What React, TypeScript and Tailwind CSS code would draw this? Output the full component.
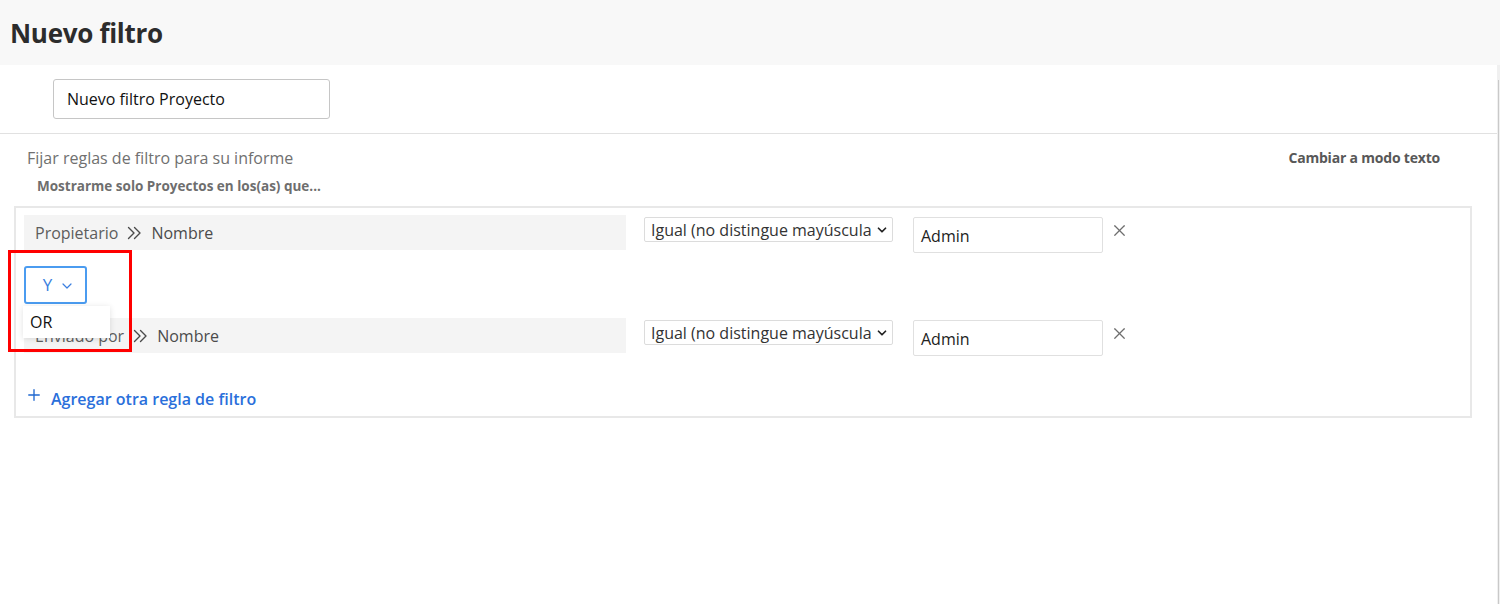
import { ChevronDown, X, Plus } from 'lucide-react'

const font = { fontFamily: '"Open Sans", Lato, sans-serif' }

function DoubleChevron() {
  return (
    <svg width="15" height="14" viewBox="0 0 15 14" fill="none" stroke="currentColor" strokeWidth="1.4" strokeLinecap="round" strokeLinejoin="round" className="mx-[9px] text-[#4a4a4a]">
      <polyline points="1.5,1.5 7,7 1.5,12.5" />
      <polyline points="7.5,1.5 13,7 7.5,12.5" />
    </svg>
  )
}

function RuleRow({ field }: { field: string }) {
  return (
    <div className="flex h-[38px] items-start">
      <div className="flex h-[35px] w-[602px] items-center bg-[#f4f4f4] pl-[11px] text-[16px] leading-[22px] text-[#5d5d5d]">
        <span>{field}</span>
        <DoubleChevron />
        <span className="text-[#4b4b4b]">Nombre</span>
      </div>
      <div className="ml-[18px] mt-[2px] flex h-[25px] w-[249px] items-center justify-between overflow-hidden rounded-[2px] border border-[#dcdcdc] bg-white pl-[6px] pr-[3px] text-[16px] leading-[22px] text-[#333]">
        <span className="overflow-hidden whitespace-nowrap">Igual (no distingue mayúscula</span>
        <ChevronDown size={14} strokeWidth={3} className="shrink-0 text-[#222]" />
      </div>
      <div className="ml-[20px] mt-[2px] flex h-[36px] w-[190px] items-end rounded-[2px] border border-[#e0e0e0] bg-white pb-[5px] pl-[7px] text-[16px] leading-[22px] text-[#222]">
        Admin
      </div>
      <X size={19} strokeWidth={1.5} className="ml-[7px] mt-[6px] text-[#6e6e6e]" />
    </div>
  )
}

export default function App() {
  return (
    <div className="flex h-[604px] w-[1500px] flex-col bg-white" style={font}>
      {/* Header */}
      <div className="flex h-[65px] shrink-0 items-center bg-[#f8f8f8] pl-[10px]">
        <h1 className="text-[26px] font-bold leading-[32px] tracking-[-0.3px] text-[#2c2c2c]">Nuevo filtro</h1>
      </div>

      <div className="flex flex-1">
        <div className="w-[1497px] bg-white">
          {/* Name */}
          <div className="h-[69px] border-b border-[#e1e1e1] pl-[53px] pt-[14px]">
            <div className="flex h-[40px] w-[277px] items-center rounded-[3px] border border-[#c6c6c6] pl-[13px] text-[16px] leading-[22px] text-[#111]">
              Nuevo filtro Proyecto
            </div>
          </div>

          {/* Rules header */}
          <div className="pt-[12px]">
            <div className="flex h-[24px] items-center justify-between pl-[27px] pr-[57px]">
              <p className="text-[16px] leading-[22px] text-[#707070]">Fijar reglas de filtro para su informe</p>
              <p className="text-[14px] font-bold leading-[20px] tracking-[-0.2px] text-[#585858]">Cambiar a modo texto</p>
            </div>
            <p className="mt-[6px] h-[20px] pl-[37px] text-[13.5px] font-bold leading-[20px] text-[#6e6e6e]">
              Mostrarme solo Proyectos en los(as) que...
            </p>
          </div>

          {/* Rules box */}
          <div className="relative ml-[14px] mt-[10px] h-[212px] w-[1458px] border-2 border-[#e8e8e8] pl-[8px] pt-[7px]">
            <RuleRow field="Propietario" />

            <div className="relative mt-[13px]">
              <div className="flex h-[38px] w-[63px] items-center justify-center gap-[7px] rounded-[3px] border-2 border-[#4b9cf0] bg-white pl-[7px] text-[17px] leading-[22px] text-[#3b7fe0]">
                <span>Y</span>
                <ChevronDown size={16} strokeWidth={1.8} className="mt-[1px]" />
              </div>
              <div className="absolute left-[-1px] top-[40px] z-10 flex h-[32px] w-[87px] items-center bg-white pl-[7px] text-[16px] leading-[22px] text-[#111] shadow-[0_1px_6px_rgba(0,0,0,0.12)]">
                OR
              </div>
            </div>

            <div className="mt-[14px]">
              <RuleRow field="Enviado por" />
            </div>

            <div className="mt-[32px] flex items-center text-[#2068d0]">
              <Plus size={18} strokeWidth={1.8} className="ml-[1px] mt-[-9px]" />
              <span className="ml-[8px] text-[16px] font-semibold leading-[22px] text-[#2a6fdb]">Agregar otra regla de filtro</span>
            </div>

            {/* highlight */}
            <div className="pointer-events-none absolute left-[-8px] top-[42px] z-20 h-[102px] w-[124px] border-[3px] border-[#f00]" />
          </div>
        </div>

        {/* scrollbar */}
        <div className="w-[3px] bg-[#f0f0f0] pt-[15px]">
          <div className="ml-[1px] h-full w-[1px] bg-[#c9c9c9]" />
        </div>
      </div>
    </div>
  )
}
